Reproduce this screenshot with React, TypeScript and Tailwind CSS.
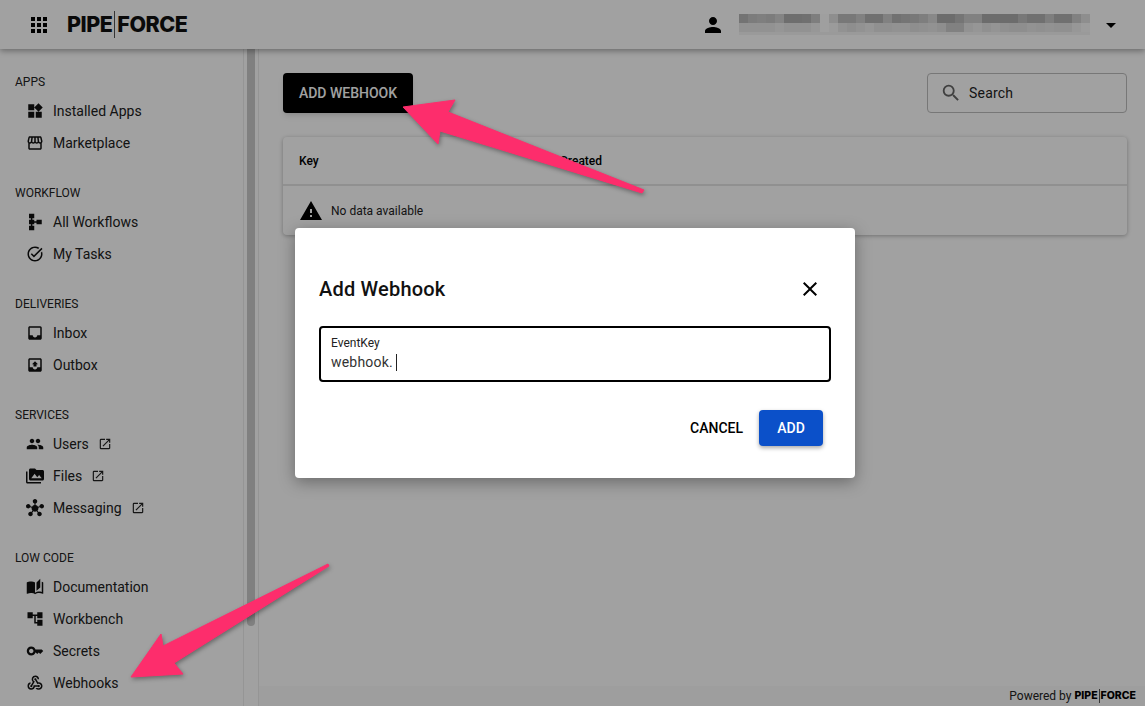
import React from 'react';
import {
  MdApps, MdWidgets, MdOutlineStorefront, MdSchema, MdOutlineTaskAlt, MdInbox, MdOutbox,
  MdPeople, MdPermMedia, MdHub, MdOpenInNew, MdAutoStories, MdAccountTree, MdKey,
  MdWebhook, MdSearch, MdPerson, MdArrowDropDown, MdClose, MdWarning,
} from 'react-icons/md';

const sections = [
  { title: 'APPS', items: [
    { label: 'Installed Apps', icon: MdWidgets },
    { label: 'Marketplace', icon: MdOutlineStorefront },
  ] },
  { title: 'WORKFLOW', items: [
    { label: 'All Workflows', icon: MdSchema },
    { label: 'My Tasks', icon: MdOutlineTaskAlt },
  ] },
  { title: 'DELIVERIES', items: [
    { label: 'Inbox', icon: MdInbox },
    { label: 'Outbox', icon: MdOutbox },
  ] },
  { title: 'SERVICES', items: [
    { label: 'Users', icon: MdPeople, external: true },
    { label: 'Files', icon: MdPermMedia, external: true },
    { label: 'Messaging', icon: MdHub, external: true },
  ] },
  { title: 'LOW CODE', items: [
    { label: 'Documentation', icon: MdAutoStories },
    { label: 'Workbench', icon: MdAccountTree },
    { label: 'Secrets', icon: MdKey },
    { label: 'Webhooks', icon: MdWebhook },
  ] },
];

// blurred account name, one grey value per 9px cell (before the backdrop)
const blurTop = [182,196,202,196,210,175,175,178,200,252,225,190,190,205,178,178,205,180,185,190,200,215,172,172,185,205,205,172,172,172,172,190,178,178,200,178,178,205,225];
const blurBottom = [232,232,232,232,238,232,232,232,240,252,245,232,225,232,238,228,228,232,232,225,228,232,225,205,205,232,238,228,235,228,225,225,232,228,232,228,228,240,248];

function Logo({ small }: { small?: boolean }) {
  return (
    <span className={small ? 'inline-flex items-center font-["Inter",sans-serif] font-extrabold text-[10.5px] text-black' : 'inline-flex items-center font-["Inter",sans-serif] font-extrabold text-[21.5px] tracking-[-0.5px] text-[#111]'}>
      PIPE
      <span className={small ? 'w-px h-[14px] bg-[#555] mx-[1px]' : 'w-px h-[27px] bg-[#555] mx-[2px]'} />
      FORCE
    </span>
  );
}

function Header() {
  return (
    <header className="relative z-10 h-[49px] shrink-0 flex items-center bg-white shadow-[0_2px_6px_rgba(0,0,0,0.35)]">
      <MdApps size={24} className="ml-[27px] text-black" />
      <div className="ml-[16px]"><Logo /></div>
      <MdPerson size={24} className="ml-auto text-black" />
      <div className="ml-[14px] flex flex-col">
        <div className="flex h-[9px]">
          {blurTop.map((v, i) => <div key={i} className="w-[9px]" style={{ background: `rgb(${v},${v},${v})` }} />)}
        </div>
        <div className="flex h-[9px]">
          {blurBottom.map((v, i) => <div key={i} className="w-[9px]" style={{ background: `rgb(${v},${v},${v})` }} />)}
        </div>
        <div className="h-[3px] w-[351px] bg-[#f4f4f4]" />
      </div>
      <MdArrowDropDown size={24} className="ml-[9px] mr-[22px] text-black" />
    </header>
  );
}

function Sidebar() {
  return (
    <aside className="w-[244px] shrink-0 border-r border-[#ececec] pt-[22px] flex flex-col gap-[23px]">
      {sections.map((s) => (
        <div key={s.title}>
          <div className="pl-[15px] h-[22px] mb-[2px] flex items-center text-[12px] text-[#222]">{s.title}</div>
          {s.items.map((item) => (
            <div key={item.label} className="h-[32px] flex items-center text-[14px] text-[#212121]">
              <span className="w-[53px] pl-[26px] flex items-center">
                <item.icon size={18} className="text-[#111]" />
              </span>
              {item.label}
              {item.external && <MdOpenInNew size={14} className="ml-[9px] text-[#222]" />}
            </div>
          ))}
        </div>
      ))}
    </aside>
  );
}

function Scrollbar() {
  return (
    <div className="w-[15px] shrink-0 border-r border-[#ececec] pl-[3px]">
      <div className="w-[8px] h-[577px] rounded-b-full bg-[#cbcbcb]" />
    </div>
  );
}

function Main() {
  return (
    <main className="flex-1 min-w-0 flex flex-col">
      <div className="flex-1 px-[24px] pr-[18px] pt-[24px]">
        <div className="flex items-center justify-between">
          <button className="h-[40px] w-[130px] rounded-[4px] bg-black text-white text-[14px] font-medium shadow-md">ADD WEBHOOK</button>
          <div className="h-[40px] w-[200px] rounded-[4px] border border-[#bdbdbd] flex items-center pl-[12px] gap-[7px] text-[14px] tracking-[0.2px] text-[#222]">
            <MdSearch size={22} className="text-[#666]" />
            Search
          </div>
        </div>
        <div className="mt-[24px] rounded-[4px] bg-white shadow-[0_1px_4px_rgba(0,0,0,0.3)]">
          <div className="h-[49px] border-b-2 border-[#e4e4e4] flex items-center pl-[16px] text-[12px] font-medium text-black">
            <span className="w-[261px]">Key</span>
            <span>Created</span>
          </div>
          <div className="h-[49px] flex items-center pl-[16px] gap-[8px] text-[12px] text-[#222]">
            <MdWarning size={24} className="text-black" />
            No data available
          </div>
        </div>
      </div>
      <footer className="h-[20px] shrink-0 bg-[#fafafa] flex items-center justify-end pr-[9px] gap-[3px] text-[12px] text-[#222]">
        Powered by <Logo small />
      </footer>
    </main>
  );
}

function Dialog() {
  return (
    <div className="absolute inset-0 z-20 bg-black/[0.37] flex items-center justify-center">
      <div className="ml-[5px] w-[560px] h-[250px] rounded-[4px] bg-white shadow-[0_4px_16px_rgba(0,0,0,0.35)] px-[24px] flex flex-col">
        <div className="h-[98px] shrink-0 flex items-center justify-between pt-[24px]">
          <h2 className="text-[20px] font-medium tracking-[0.2px] text-[#111]">Add Webhook</h2>
          <MdClose size={24} className="mr-[9px] text-black" />
        </div>
        <div className="h-[56px] rounded-[4px] border-2 border-black pl-[10px] pt-[7px]">
          <div className="text-[12px] leading-[16px] text-[#222]">EventKey</div>
          <div className="mt-[1px] flex items-center text-[14px] leading-[20px] tracking-[0.2px] text-[#333]">
            webhook.
            <span className="ml-[3px] w-px h-[17px] bg-[#222]" />
          </div>
        </div>
        <div className="mt-[28px] flex items-center justify-end pr-[8px] gap-[16px]">
          <span className="text-[14px] font-medium text-black">CANCEL</span>
          <button className="h-[36px] w-[64px] rounded-[4px] bg-[#0b50c9] text-white text-[14px] font-medium shadow-[0_2px_4px_rgba(0,0,0,0.35)]">ADD</button>
        </div>
      </div>
    </div>
  );
}

function Arrows() {
  return (
    <svg className="absolute inset-0 z-30 pointer-events-none drop-shadow-[1px_2px_2px_rgba(0,0,0,0.35)]" width="1145" height="706" viewBox="0 0 1145 706">
      <polygon fill="#fd2d6c" stroke="#fd2d6c" strokeWidth="1" strokeLinejoin="round" points="403,107 455,100 448,112 644,190 642,193 440,131 438,144" />
      <polygon fill="#fd2d6c" stroke="#fd2d6c" strokeWidth="1" strokeLinejoin="round" points="131,677 161,634 163,646 328,564 329,566 174,663 183,674" />
    </svg>
  );
}

export default function App() {
  return (
    <div className="relative w-[1145px] h-[706px] overflow-hidden bg-white font-['Roboto',sans-serif]">
      <div className="h-full flex flex-col">
        <Header />
        <div className="flex-1 flex min-h-0">
          <Sidebar />
          <Scrollbar />
          <Main />
        </div>
      </div>
      <Dialog />
      <Arrows />
    </div>
  );
}
